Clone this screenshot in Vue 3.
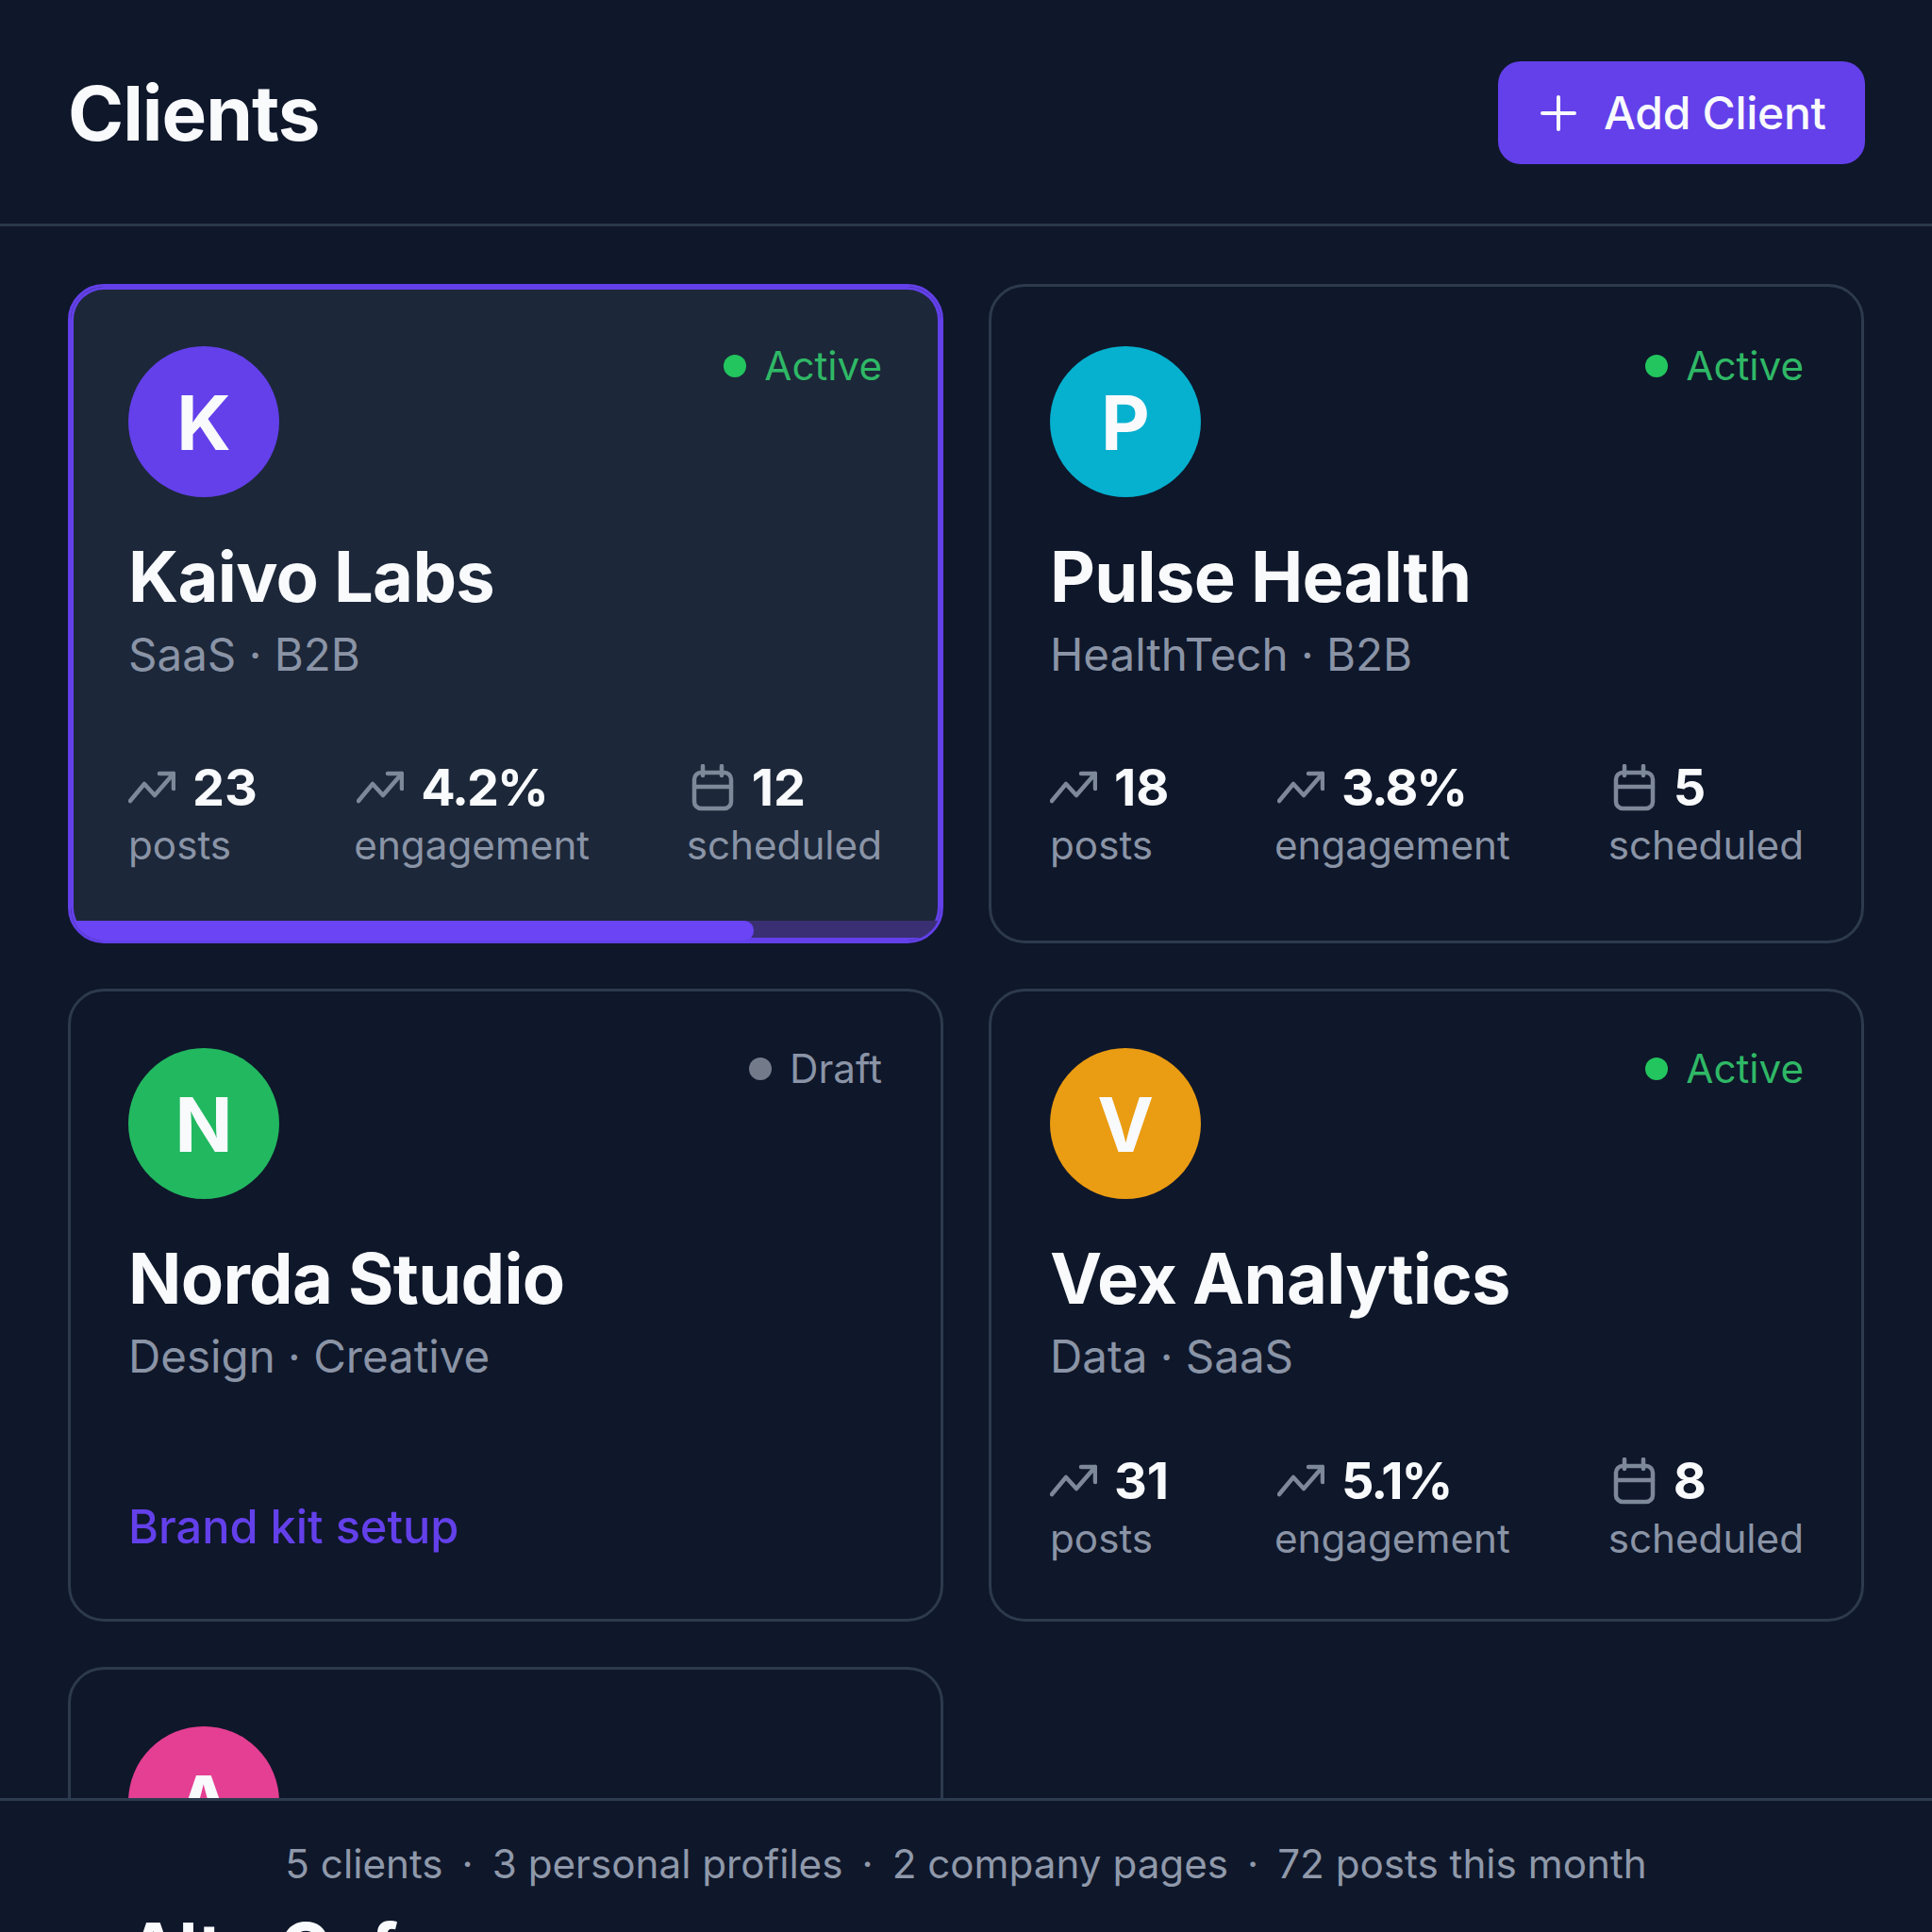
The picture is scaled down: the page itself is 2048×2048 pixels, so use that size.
<script setup>
const clients = [
  { id: 'k', letter: 'K', name: 'Kaivo Labs', sub: 'SaaS · B2B', color: '#6340ea', status: 'Active', row: 'tall', active: true, progress: 78.7,
    stats: [['23', 'posts', 'trend'], ['4.2%', 'engagement', 'trend'], ['12', 'scheduled', 'cal']] },
  { id: 'p', letter: 'P', name: 'Pulse Health', sub: 'HealthTech · B2B', color: '#06b0cf', status: 'Active', row: 'tall',
    stats: [['18', 'posts', 'trend'], ['3.8%', 'engagement', 'trend'], ['5', 'scheduled', 'cal']] },
  { id: 'n', letter: 'N', name: 'Norda Studio', sub: 'Design · Creative', color: '#22b860', status: 'Draft', row: 'short', note: 'Brand kit setup' },
  { id: 'v', letter: 'V', name: 'Vex Analytics', sub: 'Data · SaaS', color: '#ea9c13', status: 'Active', row: 'short',
    stats: [['31', 'posts', 'trend'], ['5.1%', 'engagement', 'trend'], ['8', 'scheduled', 'cal']] },
  { id: 'a', letter: 'A', name: 'Alta Cafe', sub: '', color: '#e43f92', status: '', row: 'short' }
]
const summary = ['5 clients', '3 personal profiles', '2 company pages', '72 posts this month']
</script>

<template>
  <div class="page">
    <header class="top">
      <h1 class="title">Clients</h1>
      <button class="add">
        <svg class="plus" viewBox="0 0 38 38" fill="none" stroke="currentColor" stroke-width="4" stroke-linecap="round">
          <path d="M19 2V36M2 19H36" />
        </svg>
        <span>Add Client</span>
      </button>
    </header>

    <main class="list">
      <article
        v-for="c in clients"
        :key="c.id"
        class="card"
        :class="[c.row, { active: c.active }]"
      >
        <div class="head">
          <div class="avatar" :style="{ background: c.color }">{{ c.letter }}</div>
          <div v-if="c.status" class="status" :class="c.status.toLowerCase()">
            <i class="dot"></i>{{ c.status }}
          </div>
        </div>
        <h2 v-if="c.id !== 'a'" class="name">{{ c.name }}</h2>
        <p v-if="c.sub" class="sub">{{ c.sub }}</p>
        <div v-if="c.stats" class="stats">
          <div v-for="s in c.stats" :key="s[1]" class="stat">
            <div class="value">
              <svg v-if="s[2] === 'trend'" class="ico trend" viewBox="0 0 50 35" fill="none" stroke="currentColor" stroke-width="4.5" stroke-linecap="round" stroke-linejoin="round">
                <path d="M2 32L17 14L28 26L48 3M33 3H48V19" />
              </svg>
              <svg v-else class="ico cal" viewBox="0 0 47 50" fill="none" stroke="currentColor" stroke-width="4.5" stroke-linecap="round" stroke-linejoin="round">
                <rect x="4" y="9" width="39" height="38" rx="7" />
                <path d="M13 2V12M33 2V12M4 24H43" />
              </svg>
              <span :class="{ pct: s[0].includes('%') }">{{ s[0] }}</span>
            </div>
            <div class="label">{{ s[1] }}</div>
          </div>
        </div>
        <div v-if="c.note" class="note">{{ c.note }}</div>
        <div v-if="c.progress" class="track">
          <div class="fill" :style="{ width: c.progress + '%' }"></div>
        </div>
      </article>
    </main>

    <footer class="foot">
      <div class="summary">
        <template v-for="(t, i) in summary" :key="t">
          <span v-if="i" class="sep">·</span>
          <span>{{ t }}</span>
        </template>
      </div>
      <div class="peek">Alta Cafe</div>
    </footer>
  </div>
</template>

<style>
html, body { margin: 0; background: #0f172a; }
</style>

<style scoped>
.page {
  width: 2048px;
  height: 2048px;
  overflow: hidden;
  display: flex;
  flex-direction: column;
  background: #0f172a;
  color: #f8fafc;
  font-family: Inter, "Liberation Sans", sans-serif;
}
.top {
  flex: none;
  height: 235px;
  box-sizing: content-box;
  border-bottom: 3px solid #2a3649;
  padding: 2px 71px 0 72px;
  display: flex;
  align-items: center;
  justify-content: space-between;
}
.title { margin: 0; font-size: 80px; font-weight: 700; letter-spacing: -1px; color: #f8fafc; }
.add {
  width: 389px;
  height: 109px;
  box-sizing: border-box;
  padding: 0 0 0 45px;
  border: 0;
  border-radius: 24px;
  background: #6340ea;
  color: #f8fafc;
  display: flex;
  align-items: center;
  gap: 29px;
  font: 500 48px Inter, sans-serif;
  letter-spacing: -0.3px;
}
.plus { width: 38px; height: 38px; flex: none; }

.list {
  flex: 1;
  min-height: 0;
  overflow: hidden;
  padding: 61px 72px 0;
  display: grid;
  grid-template-columns: 928px 928px;
  grid-template-rows: 699px 671px 700px;
  column-gap: 48px;
  row-gap: 48px;
  align-content: start;
}
.card {
  position: relative;
  box-sizing: border-box;
  border: 3px solid #2d3a4e;
  border-radius: 38px;
  padding: 60px 62px 56px 61px;
  display: flex;
  flex-direction: column;
  overflow: hidden;
}
.card:nth-child(even) { padding-left: 62px; padding-right: 61px; }
.card.tall { padding-top: 63px; padding-bottom: 72px; }
.card.active { background: #1c2739; border-color: #6340ea; box-shadow: inset 0 0 0 3px #6340ea; }
.head { display: flex; justify-content: space-between; align-items: flex-start; }
.avatar {
  width: 160px;
  height: 160px;
  border-radius: 50%;
  display: flex;
  align-items: center;
  justify-content: center;
  color: #f8fafc;
  font-size: 80px;
  font-weight: 700;
}
.status {
  display: flex;
  align-items: center;
  gap: 19px;
  font-size: 42.2px;
  line-height: 42px;
  color: #2fb866;
}
.short .status { line-height: 44px; }
.status.draft { color: #8a94a6; }
.dot { width: 24px; height: 24px; border-radius: 50%; background: #22c55e; }
.draft .dot { background: #737b8b; }
.name { margin: 34px 0 0; font-size: 74px; line-height: 100px; font-weight: 700; letter-spacing: -0.7px; color: #f8fafc; }
.sub { margin: 3px 0 0; font-size: 47.5px; line-height: 60px; color: #8a94a6; }
.stats { margin-top: auto; display: flex; justify-content: space-between; }
.stat:first-child { min-width: 134px; }
.value { display: flex; align-items: center; gap: 18px; font-size: 54px; line-height: 64px; font-weight: 700; color: #f8fafc; }
.pct { letter-spacing: -2px; }
.ico { flex: none; color: #7d8899; }
.trend { width: 50px; height: 35px; position: relative; top: -1px; }
.stat:nth-child(2) .trend { margin-left: 3px; }
.cal { width: 47px; height: 50px; margin-left: 4px; }
.label { font-size: 42.2px; line-height: 58px; color: #8a94a6; }
.note { margin: auto 0 11px; font-size: 48.7px; line-height: 60px; font-weight: 500; color: #6340ea; }
.track { position: absolute; left: 3px; right: 3px; bottom: 3px; height: 18px; background: #3a2f72; }
.fill { height: 21px; background: #6a44f5; border-radius: 0 10px 10px 0; }

.foot {
  flex: none;
  height: 142px;
  box-sizing: border-box;
  border-top: 3px solid #2d3b50;
  overflow: hidden;
  background: #0f172a;
}
.summary {
  margin-top: 40px;
  display: flex;
  justify-content: center;
  gap: 20px;
  font-size: 42.2px;
  line-height: 54px;
  color: #8f99aa;
}
.sep { color: #8f99aa; }
.peek { margin: 24px 0 0 135px; font-size: 74px; line-height: 76px; font-weight: 700; letter-spacing: -0.7px; color: #f8fafc; }
</style>
